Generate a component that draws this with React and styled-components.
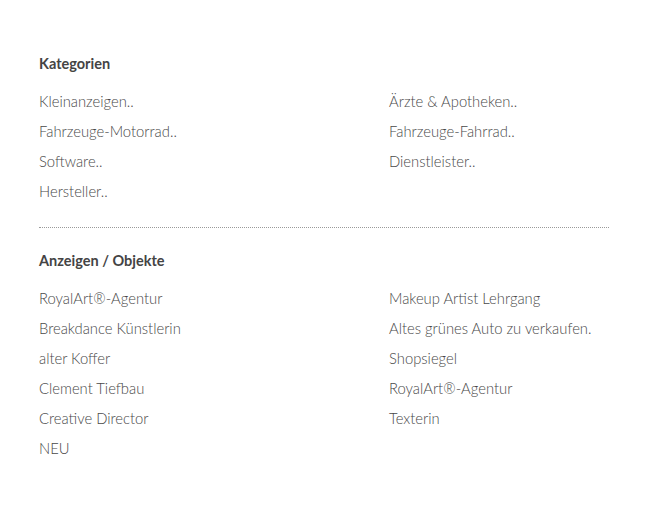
import React from 'react';
import styled, { createGlobalStyle } from 'styled-components';

const GlobalStyle = createGlobalStyle`
   html, body {
      margin: 0;
      padding: 0;
      background: #fff;
   }
   body {
      font-family: Lato, "Open Sans", sans-serif;
      color: #555;
   }
`;

const Page = styled.div`
   box-sizing: border-box;
   width: 647px;
   padding: 54px 38px 40px 39px;
`;

const Section = styled.section`
   padding-bottom: ${props => props.divided ? '16px' : '0'};
   margin-bottom: ${props => props.divided ? '23px' : '0'};
   border-bottom: ${props => props.divided ? '1px dotted #9a9a9a' : 'none'};
`;

const Heading = styled.h3`
   margin: 0 0 17px;
   font-size: 14.5px;
   font-weight: 700;
   color: #444;
   line-height: 20px;
`;

const List = styled.ul`
   list-style: none;
   margin: 0;
   padding: 0;
   display: grid;
   grid-template-columns: 350px 1fr;
   grid-auto-rows: 30px;
`;

const Item = styled.li`
   font-size: 14.8px;
   font-weight: 300;
   line-height: 20px;
   color: #484848;
   white-space: nowrap;
`;

const categories = [
   ['Kleinanzeigen..', 'Ärzte & Apotheken..'],
   ['Fahrzeuge-Motorrad..', 'Fahrzeuge-Fahrrad..'],
   ['Software..', 'Dienstleister..'],
   ['Hersteller..', null],
];

const ads = [
   ['RoyalArt®-Agentur', 'Makeup Artist Lehrgang'],
   ['Breakdance Künstlerin', 'Altes grünes Auto zu verkaufen.'],
   ['alter Koffer', 'Shopsiegel'],
   ['Clement Tiefbau', 'RoyalArt®-Agentur'],
   ['Creative Director', 'Texterin'],
   ['NEU', null],
];

const renderRows = (rows) =>
   rows.flatMap(([left, right], i) => [
      <Item key={`l${i}`}>{left}</Item>,
      <Item key={`r${i}`}>{right}</Item>,
   ]);

export default function App() {
   return (
      <>
         <GlobalStyle />
         <Page>
            <Section divided>
               <Heading>Kategorien</Heading>
               <List>{renderRows(categories)}</List>
            </Section>
            <Section>
               <Heading>Anzeigen / Objekte</Heading>
               <List>{renderRows(ads)}</List>
            </Section>
         </Page>
      </>
   );
}
